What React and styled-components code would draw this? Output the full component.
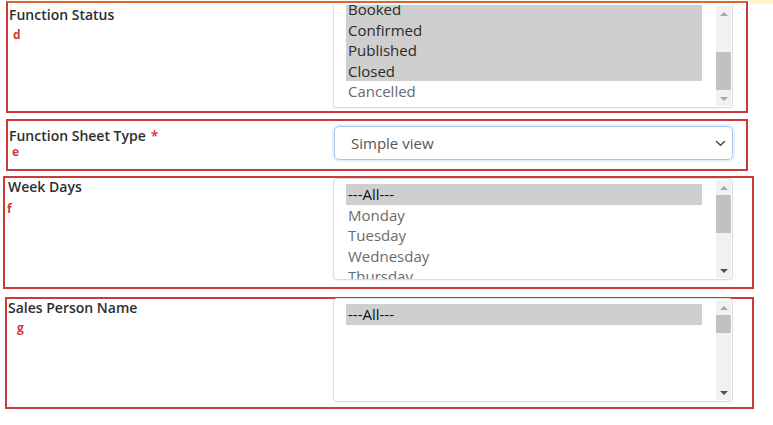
import styled, { createGlobalStyle } from "styled-components";

const GlobalStyle = createGlobalStyle`
  body {
    margin: 0;
    background: #ffffff;
    font-family: "Open Sans", "Liberation Sans", sans-serif;
  }
`;

const Page = styled.div`
  position: relative;
  width: 773px;
  height: 425px;
  padding-top: 1px;
  box-sizing: border-box;
  overflow: hidden;

  &::after {
    content: "";
    position: absolute;
    top: 0;
    left: 749px;
    right: 0;
    height: 4px;
    background: #fff8c6;
  }
`;

const Section = styled.section`
  display: flex;
  box-sizing: border-box;
  margin: ${(p) => p.$top}px 0 0 ${(p) => p.$left}px;
  width: ${(p) => p.$width}px;
  height: ${(p) => p.$height}px;
  padding-right: ${(p) => p.$padRight}px;
  border: 2px solid #cd3a3a;
  ${(p) => p.$accent && "border-top-color: #d8662e;"}
`;

const Field = styled.div`
  flex: 1;
  display: flex;
  flex-direction: column;
  align-items: flex-start;
`;

const Label = styled.label`
  margin: ${(p) => p.$top}px 0 0 ${(p) => p.$x}px;
  font-size: 14px;
  line-height: 20px;
  font-weight: 600;
  color: #2e2e2e;

  span {
    color: #d9342b;
    margin-left: 5px;
  }
`;

const Marker = styled.div`
  margin: ${(p) => p.$top}px 0 0 ${(p) => p.$x}px;
  font-size: 12px;
  line-height: 14px;
  font-weight: 700;
  color: #d23a3c;
`;

const ListBox = styled.div`
  box-sizing: border-box;
  width: 400px;
  height: ${(p) => p.$height}px;
  margin-top: ${(p) => p.$top}px;
  display: flex;
  background: #ffffff;
  border: 1px solid #dcdcdc;
  border-radius: 4px;
  box-shadow: 0 1px 2px rgba(0, 0, 0, 0.05);
  ${(p) =>
    p.$cut &&
    "border-top: none; border-top-left-radius: 0; border-top-right-radius: 0;"}
`;

const Options = styled.ul`
  flex: 1;
  margin: 0;
  padding: 0 14px 0 12px;
  list-style: none;
  overflow: hidden;
`;

const OptionStack = styled.div`
  margin-top: ${(p) => p.$offset}px;
`;

const Option = styled.li`
  height: 20.5px;
  line-height: 20.5px;
  padding-left: 2px;
  font-size: 15px;
  white-space: nowrap;
  color: ${(p) => (p.$strong ? "#111111" : p.$selected ? "#2a2a2a" : "#6b6b6b")};
  background: ${(p) => (p.$selected ? "#cfcfcf" : "transparent")};
`;

const ScrollBar = styled.div`
  width: 15px;
  margin: 1px 1px 1px 0;
  display: flex;
  flex-direction: column;
  background: #f1f1f1;
`;

const Arrow = styled.div`
  height: 15px;
  display: flex;
  align-items: center;
  justify-content: center;

  &::before {
    content: "";
    border-left: 4px solid transparent;
    border-right: 4px solid transparent;
    ${(p) => (p.$down ? "border-top" : "border-bottom")}: 4px solid
      ${(p) => (p.$dim ? "#a9a9a9" : "#505050")};
  }
`;

const Track = styled.div`
  flex: 1;
`;

const Thumb = styled.div`
  margin-top: ${(p) => p.$at}px;
  height: ${(p) => p.$size}px;
  background: #c1c1c1;
`;

const Dropdown = styled.div`
  box-sizing: border-box;
  width: 399px;
  height: 34px;
  margin-top: 5px;
  display: flex;
  align-items: center;
  justify-content: space-between;
  padding: 0 6px 0 16px;
  border: 1px solid #a4c9ef;
  border-radius: 5px;
  box-shadow: 0 0 0 2px rgba(120, 170, 230, 0.16);
  font-size: 15px;
  color: #555555;
`;

const MultiList = ({ height, top = 0, cut, offset, items, thumbAt, thumbSize, downDim }) => (
  <ListBox $height={height} $top={top} $cut={cut}>
    <Options>
      <OptionStack $offset={offset}>
        {items.map((item) => (
          <Option key={item.label} $selected={item.selected} $strong={item.strong}>
            {item.label}
          </Option>
        ))}
      </OptionStack>
    </Options>
    <ScrollBar>
      <Arrow $dim />
      <Track>
        <Thumb $at={thumbAt} $size={thumbSize} />
      </Track>
      <Arrow $down $dim={downDim} />
    </ScrollBar>
  </ListBox>
);

const statuses = [
  { label: "Booked", selected: true },
  { label: "Confirmed", selected: true },
  { label: "Published", selected: true },
  { label: "Closed", selected: true },
  { label: "Cancelled" },
];

const weekDays = [
  { label: "---All---", selected: true, strong: true },
  { label: "Monday" },
  { label: "Tuesday" },
  { label: "Wednesday" },
  { label: "Thursday" },
  { label: "Friday" },
];

const salesPeople = [{ label: "---All---", selected: true, strong: true }];

export default function App() {
  return (
    <>
      <GlobalStyle />
      <Page>
        <Section $top={0} $left={6} $width={742} $height={112} $padRight={13} $accent>
          <Field>
            <Label $top={2} $x={1}>Function Status</Label>
            <Marker $top={3} $x={5}>d</Marker>
          </Field>
          <MultiList
            height={103}
            top={2}
            cut
            offset={-5.75}
            items={statuses}
            thumbAt={31}
            thumbSize={38}
            downDim
          />
        </Section>

        <Section $top={6} $left={6} $width={742} $height={52} $padRight={13}>
          <Field>
            <Label $top={5} $x={1}>
              Function Sheet Type<span>*</span>
            </Label>
            <Marker $top={-1} $x={4}>e</Marker>
          </Field>
          <Dropdown>
            Simple view
            <svg width="11" height="7" viewBox="0 0 11 7">
              <polyline
                points="1.5,1.5 5.5,5.2 9.5,1.5"
                fill="none"
                stroke="#4a4a4a"
                strokeWidth="1.5"
                strokeLinecap="round"
                strokeLinejoin="round"
              />
            </svg>
          </Dropdown>
        </Section>

        <Section $top={5} $left={3} $width={751} $height={113} $padRight={19}>
          <Field>
            <Label $top={-1} $x={3}>Week Days</Label>
            <Marker $top={5} $x={2}>f</Marker>
          </Field>
          <MultiList
            height={102}
            offset={5}
            items={weekDays}
            thumbAt={0}
            thumbSize={38}
          />
        </Section>

        <Section $top={8} $left={5} $width={749} $height={112} $padRight={19}>
          <Field>
            <Label $top={-1} $x={1}>Sales Person Name</Label>
            <Marker $top={3} $x={10}>g</Marker>
          </Field>
          <MultiList
            height={104}
            top={-1}
            offset={5}
            items={salesPeople}
            thumbAt={0}
            thumbSize={18}
          />
        </Section>
      </Page>
    </>
  );
}
